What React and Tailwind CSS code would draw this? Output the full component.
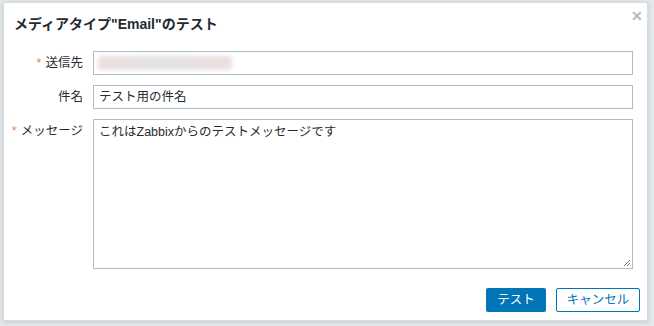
import React from 'react';

const JP = { fontFamily: '"Liberation Sans", "Noto Sans CJK JP", sans-serif' };

function Row({ label, required, children, top }) {
  return (
    <div className={`flex ${top ? 'items-start' : 'items-center'}`}>
      <div className={`w-[79px] shrink-0 text-right text-[12.5px] text-[#1f2c33] ${top ? 'pt-[3px]' : ''}`}>
        {required && <span className="mr-[4px] text-[#e8806d]">*</span>}
        {label}
      </div>
      <div className="ml-[10px] w-[540px]">{children}</div>
    </div>
  );
}

export default function App() {
  return (
    <div className="h-[326px] w-[654px] overflow-hidden bg-[#e3e8eb] pl-[3px] pt-[2px]" style={JP}>
      <div className="relative h-[319px] w-[645px] border border-[#d6dde1] bg-white shadow-[0_1px_4px_rgba(0,0,0,0.15)]">
        <button className="absolute right-[4px] top-[6px] text-[14px] font-black leading-none text-[#acbbc4]">✕</button>
        <h4 className="pl-[10px] pt-[11px] text-[14px] font-bold leading-[20px] text-[#1f2c33]">
          メディアタイプ"Email"のテスト
        </h4>
        <div className="mt-[17px] flex flex-col gap-[10px]">
          <Row label="送信先" required>
            <div className="flex h-[24px] items-center border border-[#acbbc4] px-[4px]">
              <div className="h-[14px] w-[134px] rounded-sm bg-gradient-to-r from-[#ecdfdf] via-[#e2e2e2] to-[#ecdfdf] blur-[2px]" />
            </div>
          </Row>
          <Row label="件名">
            <div className="flex h-[24px] items-center border border-[#acbbc4] px-[5px] text-[12.5px] text-[#1f2c33]">
              テスト用の件名
            </div>
          </Row>
          <Row label="メッセージ" required top>
            <div className="relative h-[150px] border border-[#acbbc4] px-[5px] pt-[3px] text-[12.5px] text-[#1f2c33]">
              これはZabbixからのテストメッセージです
              <svg className="absolute bottom-[1px] right-[1px]" width="9" height="9" viewBox="0 0 9 9">
                <path d="M8 2 L2 8 M8 5 L5 8" stroke="#6b7780" strokeWidth="1" />
              </svg>
            </div>
          </Row>
        </div>
        <div className="mt-[19px] flex justify-end gap-[10px] pr-[7px]">
          <button className="h-[24px] w-[60px] rounded-[2px] bg-[#0275b8] text-[12.5px] text-white">テスト</button>
          <button className="h-[24px] w-[84px] rounded-[2px] border border-[#0275b8] bg-white text-[12.5px] text-[#0275b8]">キャンセル</button>
        </div>
      </div>
    </div>
  );
}
